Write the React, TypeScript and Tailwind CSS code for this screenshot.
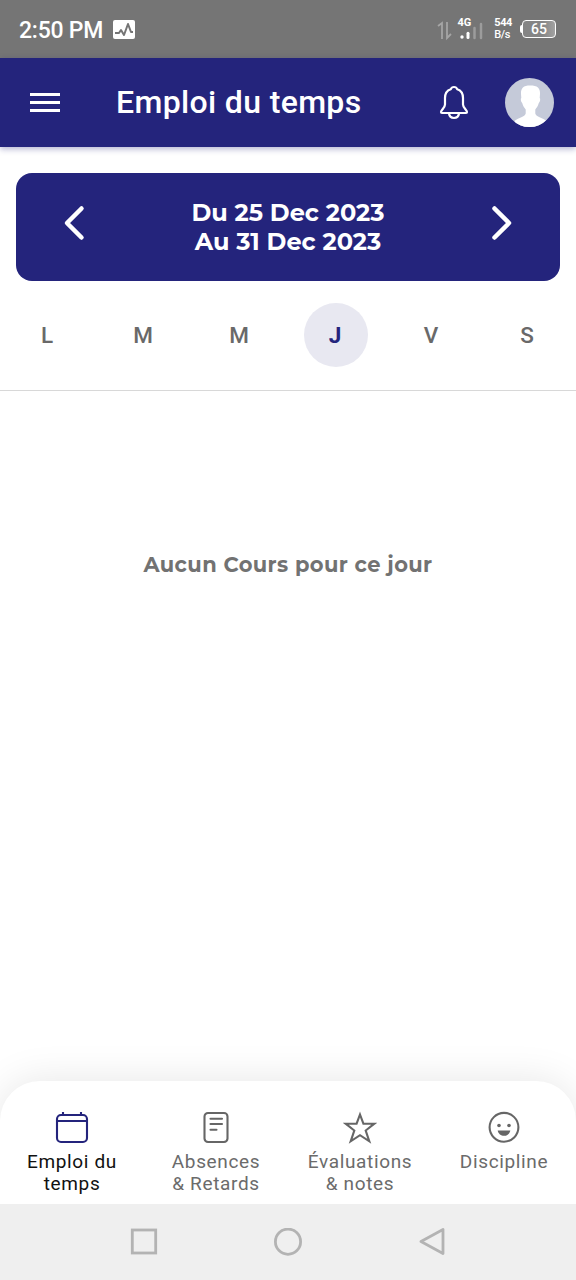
import type { ReactNode } from "react";

interface TabProps {
  label: string[];
  icon: ReactNode;
  active?: boolean;
}

const days = ["L", "M", "M", "J", "V", "S"];

function StatusBar() {
  return (
    <div className="flex h-[58px] shrink-0 items-center bg-[#757575] pl-[19px] pr-5 text-white">
      <span className="pt-[3px] text-[23px] font-medium leading-7 tracking-[-0.25px]">2:50 PM</span>
      <svg className="ml-[10px]" width="22" height="19" viewBox="0 0 22 19" fill="none">
        <rect width="22" height="19" rx="2" fill="#fff" />
        <path d="M2 13h4l2-3 3 5 4-11 3 8h2" stroke="#757575" strokeWidth="2" strokeLinejoin="round" />
      </svg>
      <svg className="ml-auto" width="48" height="26" viewBox="0 0 48 26" fill="none">
        <path d="M1 10l4-3v16M10 6v16l4-4" stroke="#a5a5a5" strokeWidth="1.8" />
        <circle cx="25" cy="21" r="1.7" fill="#fff" />
        <path d="M31 17.200v4.300" stroke="#fff" strokeWidth="3" strokeLinecap="round" />
        <path d="M37.500 12v10M44 8v14" stroke="#9c9c9c" strokeWidth="2.500" strokeLinecap="round" />
        <text x="20.500" y="9.500" fill="#fff" fontSize="11" fontWeight="700">4G</text>
      </svg>
      <div className="ml-[9px] text-[11px] font-bold leading-[12px] tracking-[-0.4px] text-white">
        <p>544</p>
        <p className="font-medium">B/s</p>
      </div>
      <div className="ml-2 flex items-center">
        <span className="h-2 w-[2px] rounded-l bg-white" />
        <div className="flex h-[18px] w-[34px] items-center justify-center rounded-[4px] border-[1.500px] border-white bg-linear-to-r from-[#858585] from-60% to-[#a2a2a2] text-[14px] font-medium">
          65
        </div>
      </div>
    </div>
  );
}

function Header() {
  return (
    <header className="z-10 flex h-[89px] shrink-0 items-center bg-[#24247c] pl-[30px] pr-[22px] shadow-[0_2px_6px_rgba(36,36,124,0.35)]">
      <div className="flex w-[30px] flex-col gap-[5px]">
        <span className="h-[3px] bg-white" />
        <span className="h-[3px] bg-white" />
        <span className="h-[3px] bg-white" />
      </div>
      <h1 className="ml-[56px] pb-0.5 text-[32px] font-medium tracking-[0.35px] text-white">Emploi du temps</h1>
      <svg className="ml-auto" width="32" height="36" viewBox="0 0 32 36" fill="none" stroke="#fff" strokeWidth="2.200" strokeLinejoin="round">
        <path d="M16 2c-1.700 0-2.700.8-3.200 2.200-4 1.200-5.800 4.700-5.800 8.800v6.500c0 3.500-4 5.500-4 7.500 0 .6.400 1 1 1h24c.6 0 1-.4 1-1 0-2-4-4-4-7.500V13c0-4.100-1.800-7.600-5.800-8.800C18.700 2.800 17.700 2 16 2z" />
        <path d="M11 28.500c.4 2.700 2.200 4.500 5 4.500s4.600-1.800 5-4.500" />
      </svg>
      <svg className="ml-[35px] rounded-full" width="49" height="49" viewBox="0 0 49 49">
        <rect width="49" height="49" fill="#c5cad9" />
        <path
          d="M25 7.500c-6.500 0-9.300 2.500-9 8.500l.3 4c-.9.700-.6 3.500.9 5 .8 3 2 4.500 3.500 6.500v4c-1 3.500-6.700 4-11.200 7.500v6h32v-6c-4.500-3.500-10.200-4-11.200-7.500v-4c1.500-2 2.700-3.500 3.500-6.500 1.500-1.500 1.800-4.300.9-5l.3-4c.3-6-2.500-8.500-10-8.500z"
          fill="#fff"
        />
      </svg>
    </header>
  );
}

function WeekPicker() {
  return (
    <div className="mx-4 mt-[26px] flex h-[108px] shrink-0 items-center justify-between rounded-2xl bg-[#24247c] px-[47px]">
      <svg className="-mt-2" width="23" height="36" viewBox="0 0 23 36" fill="none" stroke="#fff" strokeWidth="4.500" strokeLinecap="round" strokeLinejoin="round">
        <path d="M18.500 3.500L4 18l14.500 14.500" />
      </svg>
      <div className="pb-px text-center font-[Montserrat,Inter,sans-serif] text-[24px] font-bold leading-[29px] text-white">
        <p>Du 25 Dec 2023</p>
        <p>Au 31 Dec 2023</p>
      </div>
      <svg className="-mt-2" width="23" height="36" viewBox="0 0 23 36" fill="none" stroke="#fff" strokeWidth="4.500" strokeLinecap="round" strokeLinejoin="round">
        <path d="M4.500 3.500L19 18 4.500 32.500" />
      </svg>
    </div>
  );
}

function Tab({ label, icon, active }: TabProps) {
  return (
    <div className={`flex flex-1 flex-col items-center pt-[30px] ${active ? "text-[#111]" : "text-[#6b6b6b]"}`}>
      {icon}
      <div className="mt-[7px] text-center text-[19px] leading-[22px] tracking-[0.65px]">
        {label.map((line) => (
          <p key={line}>{line}</p>
        ))}
      </div>
    </div>
  );
}

const iconProps = { width: 34, height: 33, viewBox: "0 0 34 33", fill: "none", stroke: "#666", strokeWidth: 2.1 };

export default function App() {
  return (
    <div className="flex h-[1280px] w-[576px] flex-col overflow-hidden bg-white font-[Roboto,sans-serif]">
      <StatusBar />
      <Header />
      <WeekPicker />
      <div className="flex h-[110px] shrink-0 items-center border-b-[1.500px] border-[#d8d8d8] pb-0.5">
        {days.map((day, i) => (
          <div key={i} className="flex w-24 justify-center">
            <div
              className={`flex size-16 items-center justify-center rounded-full pr-0.5 pt-[2px] text-[22.5px] ${
                i === 3 ? "bg-[#e8e8f1] font-bold text-[#24247c]" : "font-medium text-[#696969]"
              }`}
            >
              {day}
            </div>
          </div>
        ))}
      </div>
      <main className="flex-1 pt-[160px] text-center font-[Montserrat,Inter,sans-serif] text-[21px] font-bold leading-7 tracking-[0.4px] text-[#727272]">
        Aucun Cours pour ce jour
      </main>

      <nav className="flex h-[123px] shrink-0 rounded-t-[40px] bg-white shadow-[0_0_40px_rgba(0,0,0,0.1)]">
        <Tab
          active
          label={["Emploi du", "temps"]}
          icon={
            <svg {...iconProps} stroke="#24247c">
              <rect x="2" y="4" width="30" height="27" rx="4" />
              <path d="M2 10h30M8 1v3M26 1v3" />
            </svg>
          }
        />
        <Tab
          label={["Absences", "& Retards"]}
          icon={
            <svg {...iconProps}>
              <rect x="5.500" y="2" width="23" height="29" rx="3.500" />
              <path d="M11.500 7.700h11.500M11.500 13h11.500M11.500 18.700h6" strokeLinecap="round" />
            </svg>
          }
        />
        <Tab
          label={["Évaluations", "& notes"]}
          icon={
            <svg {...iconProps}>
              <path d="M17 3.500l3.400 9.200h11l-8.700 6.800 3.600 10.800-9.300-6.100-9.300 6.100 3.600-10.800-8.700-6.800h11z" />
            </svg>
          }
        />
        <Tab
          label={["Discipline"]}
          icon={
            <svg {...iconProps}>
              <circle cx="17" cy="16.300" r="14.400" />
              <circle cx="12" cy="14.500" r="1.800" fill="#666" stroke="none" />
              <circle cx="22" cy="14.500" r="1.800" fill="#666" stroke="none" />
              <path d="M10.700 19.500h12.600c-.6 3.300-3.200 5.300-6.300 5.300s-5.700-2-6.300-5.300z" fill="#666" stroke="none" />
            </svg>
          }
        />
      </nav>

      <div className="z-10 flex h-[76px] shrink-0 items-center justify-center gap-[116px] bg-[#efefef]">
        <svg width="28" height="28" viewBox="0 0 28 28" fill="none" stroke="#b3b3b3" strokeWidth="2.800">
          <rect x="2.300" y="2" width="23.400" height="23" />
        </svg>
        <svg width="28" height="28" viewBox="0 0 28 28" fill="none" stroke="#b3b3b3" strokeWidth="2.800">
          <circle cx="14" cy="13.700" r="12.600" />
        </svg>
        <svg width="28" height="28" viewBox="0 0 28 28" fill="none" stroke="#b3b3b3" strokeWidth="2.800" strokeLinejoin="round">
          <path d="M25 1.500v24L3 13.500z" />
        </svg>
      </div>
    </div>
  );
}
